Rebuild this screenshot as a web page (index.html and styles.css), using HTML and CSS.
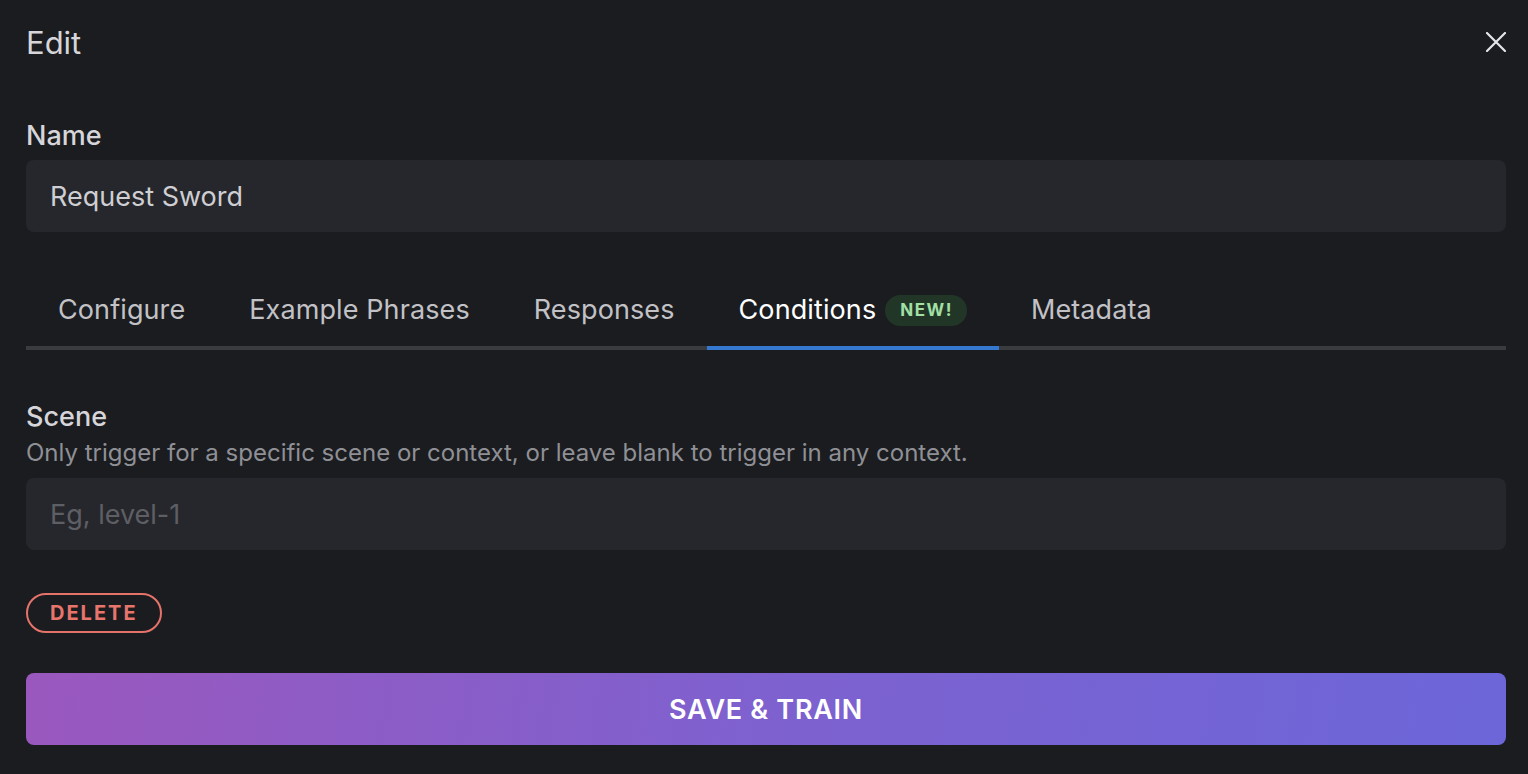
FILE: index.html
```html
<!DOCTYPE html>
<html>
<head>
<meta charset="utf-8">
<link rel="stylesheet" href="styles.css">
</head>
<body>
<div class="dialog">
  <header class="header">
    <h1 class="title">Edit</h1>
    <button class="close" aria-label="Close">
      <svg width="20" height="20" viewBox="0 0 20 20"><path d="M1 1L19 19M19 1L1 19" stroke="#e6e6e8" stroke-width="2.2" stroke-linecap="round"/></svg>
    </button>
  </header>

  <label class="label name-label">Name</label>
  <div class="input">Request Sword</div>

  <nav class="tabs">
    <div class="tab">Configure</div>
    <div class="tab">Example Phrases</div>
    <div class="tab">Responses</div>
    <div class="tab active">Conditions <span class="badge">NEW!</span></div>
    <div class="tab">Metadata</div>
  </nav>

  <label class="label scene-label">Scene</label>
  <p class="desc">Only trigger for a specific scene or context, or leave blank to trigger in any context.</p>
  <div class="input placeholder">Eg, level-1</div>

  <div class="actions">
    <button class="delete">DELETE</button>
  </div>
  <button class="save">SAVE &amp; TRAIN</button>
</div>
</body>
</html>
```

FILE: styles.css
```css
* { box-sizing: border-box; }
html, body { margin: 0; padding: 0; background: #1b1c20; }
body {
  font-family: Inter, "Noto Sans", sans-serif;
  color: #d4d4d8;
  width: 1528px;
  height: 774px;
  overflow: hidden;
}
.dialog {
  padding: 0 22px 0 26px;
  display: flex;
  flex-direction: column;
}
.header {
  height: 84px;
  display: flex;
  align-items: center;
  justify-content: space-between;
}
.title {
  margin: 0;
  font-weight: 400;
  font-size: 31px;
  color: #d6d6da;
}
.close {
  background: none;
  border: 0;
  padding: 0;
  width: 20px;
  height: 20px;
  display: flex;
}
.label {
  display: block;
  font-size: 27px;
  font-weight: 500;
  color: #d6d6da;
  line-height: 32px;
}
.name-label { margin-top: 36px; margin-bottom: 8px; }
.input {
  height: 72px;
  border-radius: 8px;
  background: #26272c;
  padding: 0 24px;
  display: flex;
  align-items: center;
  font-size: 27px;
  color: #cfcfd3;
}
.input.placeholder { color: #5e5f64; }
.tabs {
  margin-top: 50px;
  display: flex;
  height: 68px;
  box-shadow: inset 0 -4px 0 #3a3b3f;
}
.tab {
  padding: 0 32px 10px;
  display: flex;
  align-items: center;
  font-size: 27px;
  letter-spacing: 0.1px;
  color: #c2c2c6;
  border-bottom: 4px solid transparent;
  height: 68px;
}
.tab.active {
  color: #ffffff;
  border-bottom-color: #3478d0;
}
.badge {
  margin-left: 9px;
  background: #213626;
  color: #a2e0a6;
  font-size: 17px;
  font-weight: 700;
  letter-spacing: 1.5px;
  border-radius: 16px;
  height: 31px;
  padding: 0 14px 0 15px;
  display: inline-flex;
  align-items: center;
  position: relative;
  top: 1px;
}
.scene-label { margin-top: 51px; }
.desc {
  margin: 4px 0 9px;
  font-size: 24px;
  color: #8f9095;
  line-height: 32px;
}
.actions { margin-top: 43px; display: flex; }
.delete {
  font-family: inherit;
  background: none;
  border: 2px solid #e5736a;
  color: #e8756b;
  border-radius: 20px;
  height: 40px;
  padding: 0 22px;
  font-size: 20px;
  font-weight: 700;
  letter-spacing: 2px;
}
.save {
  margin-top: 40px;
  height: 72px;
  border: 0;
  border-radius: 8px;
  background: linear-gradient(100deg, #9a58be 0%, #7e61cf 50%, #6c66d9 100%);
  color: #ffffff;
  font-family: inherit;
  font-size: 27px;
  font-weight: 600;
  letter-spacing: 0.7px;
}
```
